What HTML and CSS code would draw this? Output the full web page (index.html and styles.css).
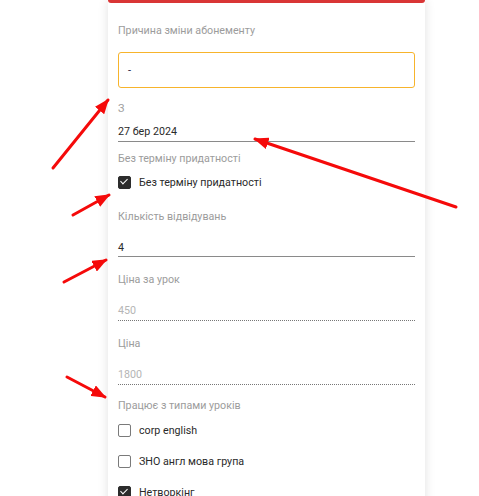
FILE: index.html
```html
<!DOCTYPE html>
<html lang="uk">
<head>
<meta charset="utf-8">
<link rel="stylesheet" href="styles.css">
</head>
<body>
<div class="page">
  <div class="card">
    <div class="topbar"></div>
    <div class="body">
      <div class="label l-first">Причина зміни абонементу</div>
      <div class="textbox">-</div>

      <div class="label l-date">З</div>
      <div class="value v-date">27 бер 2024</div>

      <div class="label l-after-date">Без терміну придатності</div>
      <div class="check-row r-first"><span class="box checked"></span><span>Без терміну придатності</span></div>

      <div class="label l-after-check">Кількість відвідувань</div>
      <div class="value v-field">4</div>

      <div class="label l-after-field">Ціна за урок</div>
      <div class="value v-field disabled">450</div>

      <div class="label l-after-field">Ціна</div>
      <div class="value v-field disabled">1800</div>

      <div class="label l-types">Працює з типами уроків</div>
      <div class="check-row r-first2"><span class="box"></span><span>corp english</span></div>
      <div class="check-row r-next"><span class="box"></span><span>ЗНО англ мова група</span></div>
      <div class="check-row r-next"><span class="box checked"></span><span>Нетворкінг</span></div>
    </div>
  </div>

  <svg class="arrows" width="479" height="496" viewBox="0 0 479 496">
    <defs>
      <marker id="ah" markerWidth="5" markerHeight="4" refX="4.5" refY="2" orient="auto" markerUnits="strokeWidth">
        <path d="M0,0 L5,2 L0,4 Z" fill="#f50a0a"/>
      </marker>
    </defs>
    <g stroke="#f50a0a" stroke-width="3" stroke-linecap="round" marker-end="url(#ah)">
      <line x1="53" y1="168" x2="108" y2="100"/>
      <line x1="73" y1="215" x2="109" y2="195"/>
      <line x1="64" y1="282" x2="106" y2="260"/>
      <line x1="456" y1="207" x2="255" y2="139"/>
      <line x1="67" y1="377" x2="105" y2="397"/>
    </g>
  </svg>
</div>
</body>
</html>
```

FILE: styles.css
```css
html, body {
  margin: 0;
  padding: 0;
  background: #fff;
}
body {
  font-family: Roboto, "Noto Sans", sans-serif;
  width: 479px;
  height: 496px;
  overflow: hidden;
}
.page {
  position: relative;
  width: 479px;
  height: 496px;
  overflow: hidden;
}
.card {
  margin-left: 108px;
  width: 317px;
  height: 520px;
  background: #fff;
  box-shadow: 0 0 10px rgba(0,0,0,0.12);
}
.topbar {
  height: 3px;
  background: #d93535;
  border-radius: 0 0 3px 3px;
}
.body {
  padding: 0 10px;
  display: flex;
  flex-direction: column;
}
.label {
  font-size: 10.7px;
  line-height: 14px;
  height: 14px;
  padding-top: 2px;
  color: #9c9c9c;
  white-space: nowrap;
}
.l-first { margin-top: 19px; }
.textbox {
  margin-top: 14px;
  box-sizing: border-box;
  height: 36px;
  border: 1px solid #f7b42c;
  border-radius: 3px;
  padding: 1px 9px 0;
  font-size: 11px;
  line-height: 34px;
  color: #1a2340;
}
.l-date { margin-top: 12px; }
.value {
  font-size: 10.7px;
  line-height: 14px;
  padding-top: 2px;
  color: #2a2a2a;
  border-bottom: 1px solid #8a8a8a;
}
.v-date {
  margin-top: 7px;
  padding-bottom: 2px;
}
.l-after-date { margin-top: 8px; }
.check-row {
  display: flex;
  align-items: center;
  gap: 8px;
  height: 14px;
  font-size: 10.7px;
  color: #2a2a2a;
  white-space: nowrap;
}
.r-first { margin-top: 9px; }
.box {
  box-sizing: border-box;
  width: 13px;
  height: 13px;
  border: 1.5px solid #7a7a7a;
  border-radius: 2px;
  flex: none;
  position: relative;
}
.box.checked {
  background: #2c2c2c;
  border-color: #2c2c2c;
}
.box.checked::after {
  content: "";
  position: absolute;
  left: 3px;
  top: 0.5px;
  width: 3px;
  height: 6px;
  border: solid #fff;
  border-width: 0 1.5px 1.5px 0;
  transform: rotate(45deg);
}
.l-after-check { margin-top: 19px; }
.v-field {
  margin-top: 15px;
  padding-bottom: 1px;
}
.value.disabled {
  color: #b5b5b5;
  padding-bottom: 2px;
  border-bottom: 1px dotted #777;
}
.l-after-field { margin-top: 14px; }
.l-types { margin-top: 12px; }
.r-first2 { margin-top: 10px; }
.r-next { margin-top: 17px; }
.arrows {
  position: absolute;
  left: 0;
  top: 0;
  pointer-events: none;
}
```
